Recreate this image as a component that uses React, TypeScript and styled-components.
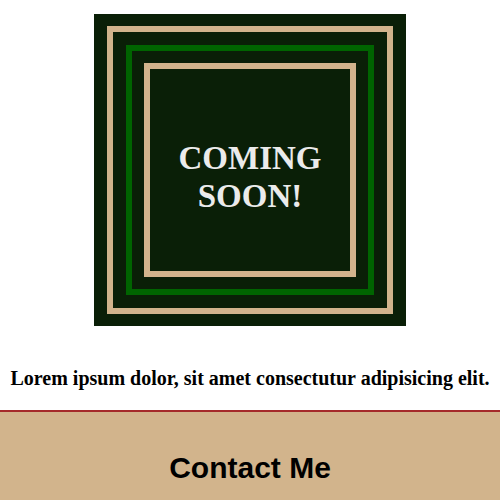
import React from "react";
import styled, { createGlobalStyle } from "styled-components";

const GlobalStyle = createGlobalStyle`
  html, body { margin: 0; padding: 0; background: #ffffff; }
  body { font-family: "Liberation Serif", "Times New Roman", serif; }
`;

const Page = styled.div`
  display: flex;
  flex-direction: column;
  align-items: stretch;
  min-height: 500px;
`;

const Main = styled.main`
  display: flex;
  flex-direction: column;
  align-items: center;
  padding-top: 14px;
`;

const Poster = styled.div`
  box-sizing: border-box;
  width: 312px;
  height: 312px;
  background: #0a1f07;
  padding: 12px 13px 12px 13px;
  display: flex;
`;

const Frame = styled.div<{ $color: string; $gap: string }>`
  flex: 1;
  display: flex;
  border: 6px solid ${(p) => p.$color};
  padding: ${(p) => p.$gap};
`;

const Inner = styled.div`
  flex: 1;
  border: 6px solid #d2b48c;
  display: flex;
  align-items: center;
  justify-content: center;
  padding-top: 13px;
`;

const Title = styled.h1`
  margin: 0;
  font-family: "Liberation Serif", "Times New Roman", serif;
  font-weight: bold;
  font-size: 33px;
  line-height: 38px;
  text-align: center;
  color: #ebebeb;
`;

const Tagline = styled.p`
  margin: 41px 0 20px;
  font-family: "Liberation Serif", "Times New Roman", serif;
  font-weight: bold;
  font-size: 20px;
  text-align: center;
  color: #000;
`;

const Footer = styled.footer`
  flex: 1;
  background: #d2b48c;
  border-top: 2px solid #a52a2a;
  padding-top: 39px;
`;

const FooterTitle = styled.h2`
  margin: 0;
  font-family: "Liberation Sans", Arial, sans-serif;
  font-weight: bold;
  font-size: 30px;
  text-align: center;
  color: #000;
`;

export default function App() {
  return (
    <>
      <GlobalStyle />
      <Page>
        <Main>
          <Poster>
            <Frame $color="#d2b48c" $gap="13px">
              <Frame $color="#006400" $gap="12px">
                <Inner>
                  <Title>
                    COMING
                    <br />
                    SOON!
                  </Title>
                </Inner>
              </Frame>
            </Frame>
          </Poster>
          <Tagline>Lorem ipsum dolor, sit amet consectutur adipisicing elit.</Tagline>
        </Main>
        <Footer>
          <FooterTitle>Contact Me</FooterTitle>
        </Footer>
      </Page>
    </>
  );
}
